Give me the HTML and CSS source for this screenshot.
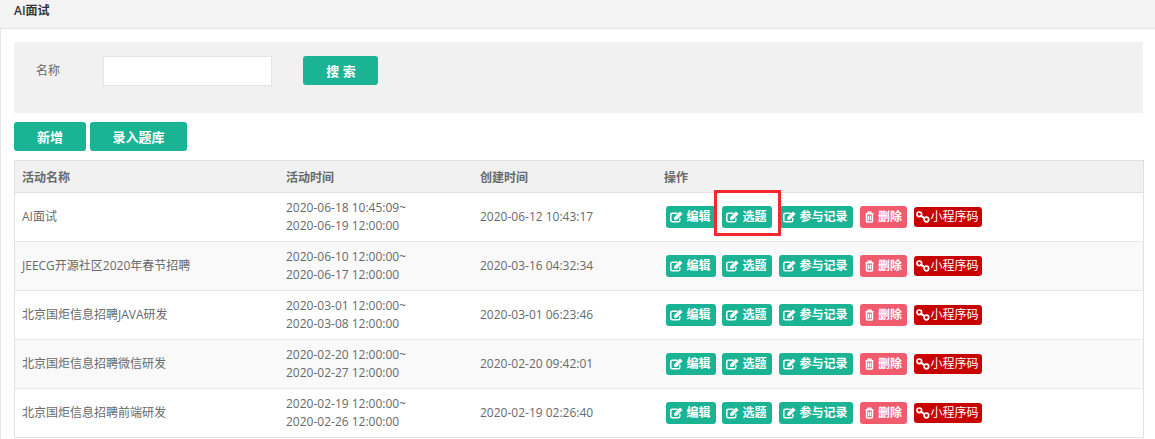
FILE: index.html
```html
<!DOCTYPE html>
<html lang="zh-CN">
<head>
<meta charset="utf-8">
<title>AI面试</title>
<link rel="stylesheet" href="styles.css">
</head>
<body>
<svg class="defs" width="0" height="0" aria-hidden="true">
  <symbol id="i-edit" viewBox="0 0 13 12"><path d="M9.800 7v2.200a1.600 1.600 0 0 1-1.600 1.600H2.400A1.600 1.600 0 0 1 .8 9.200V3.800a1.600 1.600 0 0 1 1.600-1.600h5.200" fill="none" stroke="currentColor" stroke-width="1.500"/><path d="M4.200 6.200 10 .4l2.600 2.500-5.800 5.900H4.200z" fill="currentColor"/></symbol>
  <symbol id="i-trash" viewBox="0 0 11 12"><path d="M1.500 2.700h8M4 2.500V1.100h3v1.400M2.500 3v7.100a1 1 0 0 0 1 .9h4a1 1 0 0 0 1-.9V3M4.500 4.800v4.400M6.500 4.800v4.400" fill="none" stroke="currentColor" stroke-width="1.400"/></symbol>
  <symbol id="i-link" viewBox="0 0 14 12"><circle cx="3.300" cy="3.300" r="2.300" fill="none" stroke="currentColor" stroke-width="1.700"/><circle cx="10.400" cy="8.500" r="2.300" fill="none" stroke="currentColor" stroke-width="1.700"/><path d="M5 4.800 8.600 7.200" stroke="currentColor" stroke-width="2"/></symbol>
</svg>
<header class="page-title"><h1>AI面试</h1></header>
<main class="content">
  <form class="search-panel">
    <label class="search-label" for="name">名称</label>
    <input class="search-input" id="name" type="text">
    <button class="btn btn-search" type="button">搜 索</button>
  </form>
  <div class="toolbar">
    <button class="btn btn-new" type="button">新增</button>
    <button class="btn btn-import" type="button">录入题库</button>
  </div>
  <table class="list">
    <colgroup><col class="c1"><col class="c2"><col class="c3"><col class="c4"></colgroup>
    <thead><tr><th>活动名称</th><th>活动时间</th><th>创建时间</th><th>操作</th></tr></thead>
    <tbody>
      <tr>
        <td>AI面试</td><td>2020-06-18 10:45:09~<br>2020-06-19 12:00:00</td><td>2020-06-12 10:43:17</td>
        <td class="ops"><div class="actions"><a class="tag green w50"><svg><use href="#i-edit"/></svg>编辑</a><span class="marked"><a class="tag green w50"><svg><use href="#i-edit"/></svg>选题</a><span class="red-box"></span></span><a class="tag green w74"><svg><use href="#i-edit"/></svg>参与记录</a><a class="tag pink w47"><svg class="sm"><use href="#i-trash"/></svg>删除</a><a class="tag darkred w68"><svg class="lg"><use href="#i-link"/></svg>小程序码</a></div></td>
      </tr>
      <tr>
        <td>JEECG开源社区2020年春节招聘</td><td>2020-06-10 12:00:00~<br>2020-06-17 12:00:00</td><td>2020-03-16 04:32:34</td>
        <td class="ops"><div class="actions"><a class="tag green w50"><svg><use href="#i-edit"/></svg>编辑</a><a class="tag green w50"><svg><use href="#i-edit"/></svg>选题</a><a class="tag green w74"><svg><use href="#i-edit"/></svg>参与记录</a><a class="tag pink w47"><svg class="sm"><use href="#i-trash"/></svg>删除</a><a class="tag darkred w68"><svg class="lg"><use href="#i-link"/></svg>小程序码</a></div></td>
      </tr>
      <tr>
        <td>北京国炬信息招聘JAVA研发</td><td>2020-03-01 12:00:00~<br>2020-03-08 12:00:00</td><td>2020-03-01 06:23:46</td>
        <td class="ops"><div class="actions"><a class="tag green w50"><svg><use href="#i-edit"/></svg>编辑</a><a class="tag green w50"><svg><use href="#i-edit"/></svg>选题</a><a class="tag green w74"><svg><use href="#i-edit"/></svg>参与记录</a><a class="tag pink w47"><svg class="sm"><use href="#i-trash"/></svg>删除</a><a class="tag darkred w68"><svg class="lg"><use href="#i-link"/></svg>小程序码</a></div></td>
      </tr>
      <tr>
        <td>北京国炬信息招聘微信研发</td><td>2020-02-20 12:00:00~<br>2020-02-27 12:00:00</td><td>2020-02-20 09:42:01</td>
        <td class="ops"><div class="actions"><a class="tag green w50"><svg><use href="#i-edit"/></svg>编辑</a><a class="tag green w50"><svg><use href="#i-edit"/></svg>选题</a><a class="tag green w74"><svg><use href="#i-edit"/></svg>参与记录</a><a class="tag pink w47"><svg class="sm"><use href="#i-trash"/></svg>删除</a><a class="tag darkred w68"><svg class="lg"><use href="#i-link"/></svg>小程序码</a></div></td>
      </tr>
      <tr>
        <td>北京国炬信息招聘前端研发</td><td>2020-02-19 12:00:00~<br>2020-02-26 12:00:00</td><td>2020-02-19 02:26:40</td>
        <td class="ops"><div class="actions"><a class="tag green w50"><svg><use href="#i-edit"/></svg>编辑</a><a class="tag green w50"><svg><use href="#i-edit"/></svg>选题</a><a class="tag green w74"><svg><use href="#i-edit"/></svg>参与记录</a><a class="tag pink w47"><svg class="sm"><use href="#i-trash"/></svg>删除</a><a class="tag darkred w68"><svg class="lg"><use href="#i-link"/></svg>小程序码</a></div></td>
      </tr>
    </tbody>
  </table>
</main>
</body>
</html>
```
FILE: styles.css
```css
* { box-sizing: border-box; }
html, body { margin: 0; padding: 0; overflow: hidden; }
body {
  width: 1155px;
  height: 439px;
  background: #fff;
  color: #676a6c;
  font-family: "Open Sans", "Noto Sans CJK SC", sans-serif;
  font-size: 12px;
}
.defs { position: absolute; }
.page-title {
  height: 29px;
  background: #f3f3f4;
  border-bottom: 1px solid #e0e0e0;
  padding: 0 14px;
}
.page-title h1 {
  margin: 0;
  font-size: 12px;
  font-weight: 600;
  line-height: 21px;
  color: #333;
}
.content {
  border-left: 1px solid #e7e7e7;
  padding: 13px 12px 0 13px;
  height: 410px;
}
.search-panel {
  display: flex;
  align-items: flex-start;
  height: 71px;
  padding-top: 14px;
  background: #f1f1f1;
}
.search-label {
  width: 89px;
  padding-left: 22px;
  line-height: 29px;
}
.search-input {
  width: 169px;
  height: 30px;
  margin: 0 31px 0 0;
  border: 1px solid #e5e6e7;
  background: #fff;
  padding: 0 8px;
}
.btn {
  height: 29px;
  border: 0;
  border-radius: 3px;
  background: #1ab394;
  color: #fff;
  font-family: inherit;
  font-size: 13px;
  font-weight: 700;
  padding: 0;
}
.btn-search { width: 75px; padding-left: 1px; }
.toolbar {
  display: flex;
  gap: 4px;
  margin-top: 9px;
  margin-bottom: 9px;
}
.btn-new { width: 72px; }
.btn-import { width: 97px; }
.list {
  width: 1129px;
  border-collapse: collapse;
  table-layout: fixed;
  border: 1px solid #e0e0e0;
}
.c1 { width: 264px; }
.c2 { width: 194px; }
.c3 { width: 184px; }
.c4 { width: 487px; }
.list th {
  height: 32px;
  padding: 0 7.5px;
  text-align: left;
  font-weight: 700;
  background: #f1f1f1;
  border-bottom: 1px solid #e0e0e0;
}
.list td {
  height: 49px;
  padding: 0 7.5px 1px;
  line-height: 18px;
  border-top: 1px solid #e7e7e7;
}
.list th:first-child, .list td:first-child { padding-left: 7px; }
.list tbody tr:nth-child(even) { background: #f9f9f9; }
.list td.ops { padding: 0 0 0 9px; }
.actions {
  display: flex;
  align-items: center;
  gap: 7px;
  height: 22px;
}
.actions > .tag:first-child { margin-right: -1px; }
.tag {
  display: flex;
  align-items: center;
  justify-content: center;
  gap: 3px;
  height: 22px;
  border-radius: 3px;
  color: #fff;
  font-size: 12px;
  font-weight: 700;
  white-space: nowrap;
}
.tag svg { width: 13px; height: 12px; flex: none; }
.tag svg.sm { width: 11px; }
.tag svg.lg { width: 14px; }
.green { background: #1ab394; }
.pink { background: #f05b6e; }
.darkred { background: #c80000; height: 20px; font-weight: 400; gap: 0; }
.w50 { width: 50px; }
.w74 { width: 74px; }
.w47 { width: 47px; }
.w68 { width: 68px; }
.marked { position: relative; display: block; }
.red-box {
  position: absolute;
  left: -8px;
  top: -16px;
  width: 67px;
  height: 46px;
  border: 3px solid #f5282d;
}
```
